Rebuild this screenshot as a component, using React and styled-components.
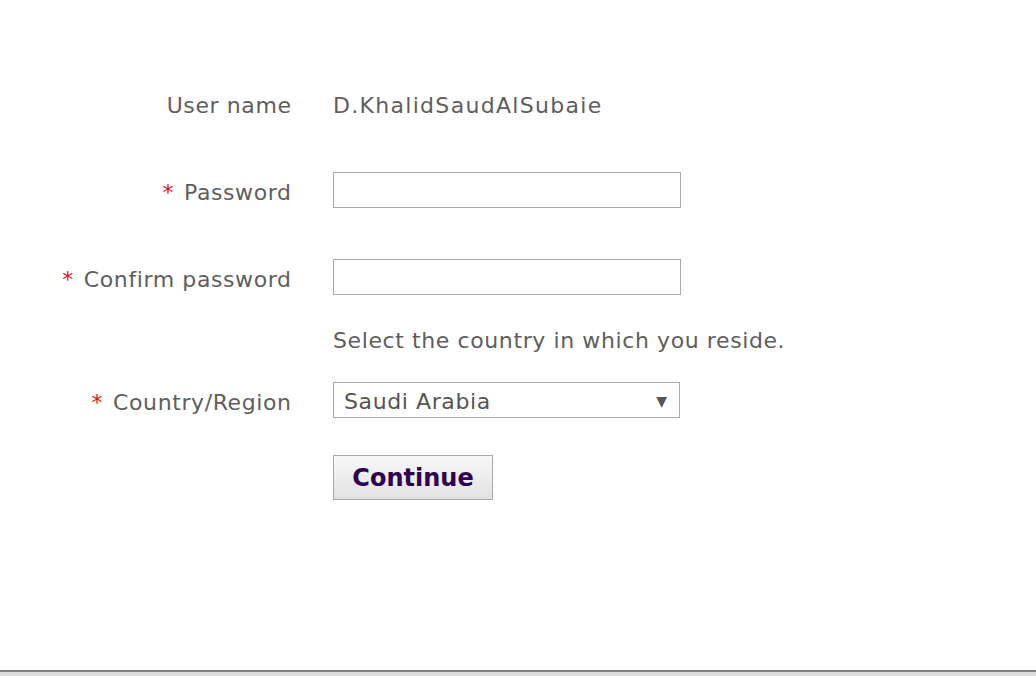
import React from "react";
import styled, { createGlobalStyle } from "styled-components";

const Global = createGlobalStyle`
  html, body { margin: 0; padding: 0; background: #fff; }
  body { font-family: "DejaVu Sans", Verdana, sans-serif; }
`;

const Page = styled.div`
  height: 676px;
  display: flex;
  flex-direction: column;
  box-sizing: border-box;
`;

const Form = styled.div`
  flex: 1;
  display: grid;
  grid-template-columns: 291px 1fr;
  column-gap: 42px;
  align-content: start;
  padding-top: 87px;
`;

const Label = styled.div`
  display: flex;
  align-items: center;
  justify-content: flex-end;
  box-sizing: border-box;
  height: ${(p) => p.$h || 36}px;
  margin-top: ${(p) => p.$mt || 0}px;
  padding-top: ${(p) => (p.$req ? 4 : 0)}px;
  font-size: 22px;
  letter-spacing: 0.6px;
  color: #5e5e5e;
  white-space: nowrap;
  margin-right: -0.6px;
`;

const Star = styled.span`
  color: #e01010;
  margin-right: 10px;
`;

const Field = styled.div`
  display: flex;
  align-items: center;
  height: ${(p) => p.$h || 36}px;
  margin-top: ${(p) => p.$mt || 0}px;
  font-size: 22px;
  letter-spacing: ${(p) => (p.$wide ? 1.3 : 0.6)}px;
  color: #5e5e5e;
  white-space: nowrap;
`;

const Input = styled.input`
  box-sizing: border-box;
  width: 348px;
  height: 36px;
  border: 1px solid #a9a9a9;
  padding: 0 8px;
  font: inherit;
  outline: none;
`;

const SelectBox = styled.div`
  box-sizing: border-box;
  width: 347px;
  height: 36px;
  border: 1px solid #a9a9a9;
  display: flex;
  align-items: center;
  justify-content: space-between;
  padding: 2px 12px 0 10px;
  font-size: 22px;
  letter-spacing: 0.6px;
  color: #555;
`;

const Arrow = styled.span`
  font-size: 14px;
  letter-spacing: 0;
  color: #555;
`;

const Button = styled.button`
  box-sizing: border-box;
  width: 160px;
  height: 45px;
  border: 1px solid #a9a9a9;
  background: linear-gradient(#f8f8f8, #e2e2e2);
  font-family: "DejaVu Sans", Verdana, sans-serif;
  font-weight: bold;
  font-size: 24px;
  letter-spacing: 0;
  color: #2d0050;
  padding: 0;
`;

const Footer = styled.div`
  height: 4px;
  border-top: 2px solid #808080;
  background: #dcdcdc;
`;

export default function App() {
  return (
    <Page>
      <Global />
      <Form>
        <Label>User name</Label>
        <Field $wide>D.KhalidSaudAlSubaie</Field>

        <Label $mt={49} $req>
          <Star>*</Star>Password
        </Label>
        <Field $mt={49}>
          <Input type="password" />
        </Field>

        <Label $mt={51} $req>
          <Star>*</Star>Confirm password
        </Label>
        <Field $mt={51}>
          <Input type="password" />
        </Field>

        <Label $mt={27} />
        <Field $mt={27}>Select the country in which you reside.</Field>

        <Label $mt={24} $req>
          <Star>*</Star>Country/Region
        </Label>
        <Field $mt={24}>
          <SelectBox>
            Saudi Arabia
            <Arrow>▼</Arrow>
          </SelectBox>
        </Field>

        <div />
        <Field $h={45} $mt={37}>
          <Button>Continue</Button>
        </Field>
      </Form>
      <Footer />
    </Page>
  );
}
